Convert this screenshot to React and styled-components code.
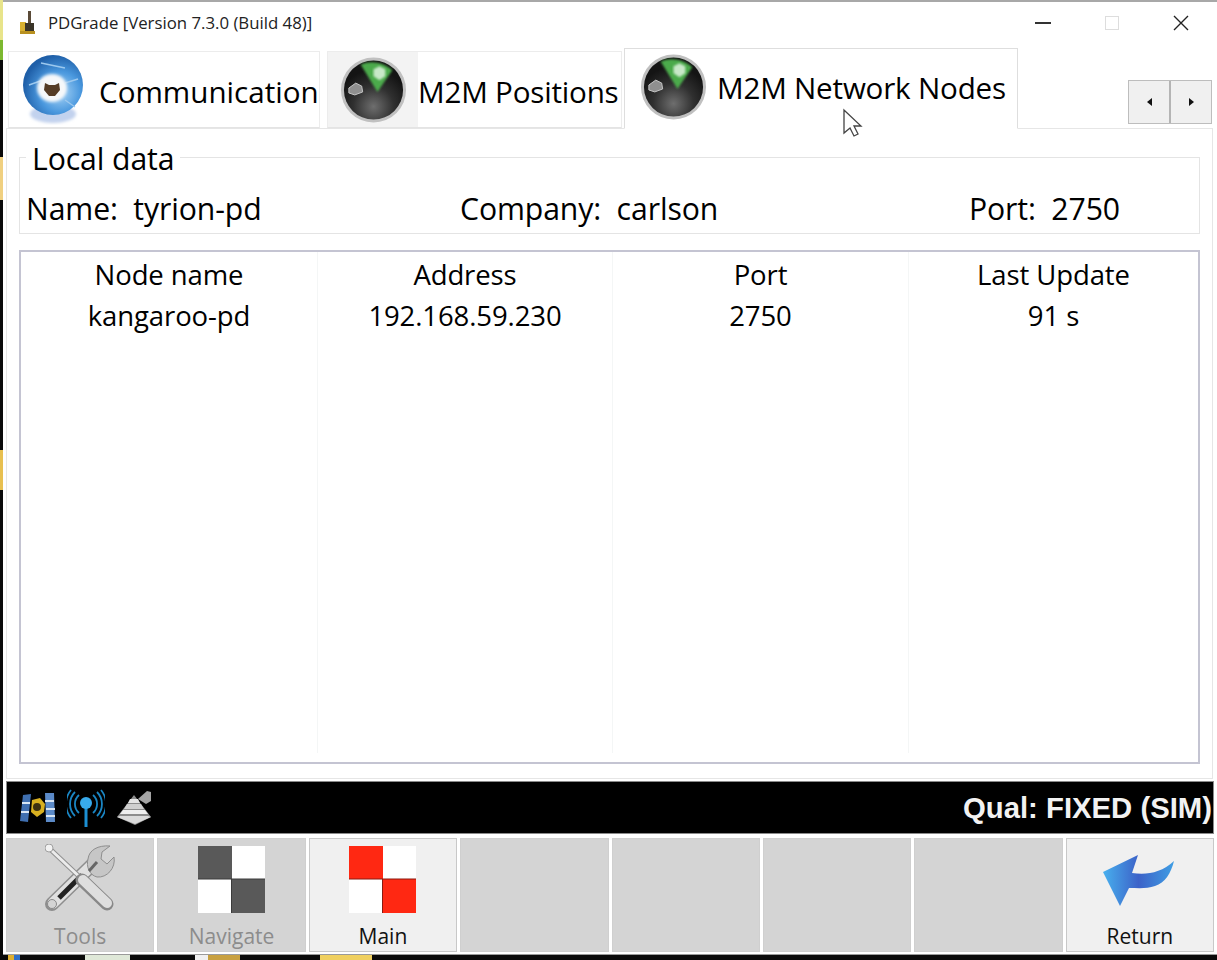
import React from 'react';
import styled, { createGlobalStyle } from 'styled-components';

const GlobalStyle = createGlobalStyle`
  html, body {
    margin: 0;
    padding: 0;
    background: #0b0b0b;
  }
  body {
    font-family: "Open Sans", "Noto Sans", sans-serif;
    color: #000;
  }
`;

const Desktop = styled.div`
  width: 1217px;
  height: 960px;
  overflow: hidden;
  padding-left: 3px;
  box-sizing: border-box;
  background: linear-gradient(
    180deg,
    #e8e48a 0 40px,
    #7cb830 40px 60px,
    #0a0a0a 60px 157px,
    #f0d080 157px 200px,
    #0a0a0a 200px 450px,
    #e8c050 450px 490px,
    #0a0a0a 490px 100%
  );
`;

const Window = styled.div`
  width: 1214px;
  height: 955px;
  box-sizing: border-box;
  background: #fff;
  border-top: 2px solid #a8a8a8;
  border-bottom: 1px solid #9a9a9a;
  display: flex;
  flex-direction: column;
  position: relative;
`;

const TaskStrip = styled.div`
  height: 5px;
  margin-left: -3px;
  background: linear-gradient(
    90deg,
    #0a0a0a 0 8px,
    #e0b030 8px 14px,
    #3070c8 14px 20px,
    #0a0a0a 20px 85px,
    #dfe8d8 85px 130px,
    #0a0a0a 130px 195px,
    #f0f0f0 195px 208px,
    #c8a040 208px 240px,
    #0a0a0a 240px 320px,
    #f0d060 320px 372px,
    #0a0a0a 372px 100%
  );
`;

const TitleBar = styled.div`
  height: 44px;
  flex: none;
  box-sizing: border-box;
  display: flex;
  align-items: center;
  padding: 0 2px 3px 15px;
  font-size: 16.8px;
  color: #222;
`;

const TitleText = styled.span`
  margin-left: 10px;
  flex: 1;
`;

const WinButton = styled.div`
  width: 69px;
  display: flex;
  align-items: center;
  justify-content: center;
`;

const TabRow = styled.div`
  height: 82px;
  flex: none;
  display: flex;
  align-items: flex-end;
  padding-left: 5px;
  position: relative;
`;

const Tab = styled.div`
  height: ${({ $active }) => ($active ? '81px' : '77px')};
  width: ${({ $w }) => $w}px;
  margin-left: ${({ $before }) => $before || 0}px;
  box-sizing: border-box;
  display: flex;
  align-items: center;
  background: ${({ $shade }) => ($shade ? '#f3f3f3' : '#fff')};
  border: 1px solid ${({ $active }) => ($active ? '#dedede' : '#ececec')};
  border-bottom-color: ${({ $active }) => ($active ? '#fff' : '#e4e4e4')};
  padding-left: ${({ $pad }) => $pad}px;
  padding-bottom: ${({ $active }) => ($active ? '4px' : '0')};
  font-size: 29.6px;
  letter-spacing: ${({ $tight }) => ($tight ? '-0.2px' : '0')};
  white-space: nowrap;
  margin-bottom: ${({ $active }) => ($active ? '-1px' : '0')};
  position: relative;
  z-index: ${({ $active }) => ($active ? 1 : 0)};
`;

const TabLabel = styled.span`
  margin-left: ${({ $gap }) => $gap}px;
  background: #fff;
  align-self: stretch;
  flex: 1;
  display: flex;
  align-items: center;
  padding-top: ${({ $active }) => ($active ? '2px' : '4px')};
`;

const ScrollArrows = styled.div`
  position: absolute;
  right: 5px;
  bottom: 4px;
  display: flex;
  height: 42px;
  border: 1px solid #bdbdbd;
  background: #f0f0f0;
`;

const ScrollArrow = styled.div`
  width: 40px;
  display: flex;
  align-items: center;
  justify-content: center;
  & + & {
    border-left: 2px solid #b4b4b4;
  }
`;

const TabPanel = styled.div`
  height: 651px;
  flex: none;
  margin: 0 4px 0 3px;
  box-sizing: border-box;
  border: 1px solid #e6e6e6;
  padding: 28px 12px 14px 12px;
  display: flex;
  flex-direction: column;
`;

const LocalData = styled.div`
  height: 77px;
  flex: none;
  box-sizing: border-box;
  border: 1px solid #e4e4e4;
  position: relative;
  display: flex;
  align-items: flex-end;
  padding: 0 0 4px 6px;
  font-size: 30.2px;
  letter-spacing: -0.1px;
`;

const Legend = styled.div`
  position: absolute;
  left: 6px;
  top: -18px;
  background: #fff;
  padding: 0 6px;
  line-height: 38px;
`;

const Field = styled.div`
  white-space: pre;
  width: ${({ $w }) => ($w ? `${$w}px` : 'auto')};
  line-height: 40px;
`;

const NodeTable = styled.div`
  margin-top: 16px;
  height: 514px;
  flex: none;
  box-sizing: border-box;
  border: 2px solid #c4c4d2;
  display: grid;
  grid-template-columns: 296px 295px 296px 1fr;
  font-size: 27.5px;
  letter-spacing: -0.1px;
`;

const Column = styled.div`
  border-left: ${({ $first }) => ($first ? 'none' : '1px solid #f4f6f6')};
  text-align: center;
  margin-bottom: 9px;
`;

const HeadCell = styled.div`
  height: 44px;
  line-height: 45px;
`;

const DataCell = styled.div`
  height: 39px;
  line-height: 39px;
`;

const StatusBar = styled.div`
  height: 53px;
  flex: none;
  margin: 2px 3px 0 3px;
  box-sizing: border-box;
  background: #000;
  border: 1px solid #8a8a8a;
  display: flex;
  align-items: center;
  padding: 0 1px 0 13px;
  gap: 12px;
`;

const Quality = styled.div`
  margin-left: auto;
  font-family: "Liberation Sans", Arial, sans-serif;
  font-weight: 700;
  font-size: 29.3px;
  color: #f2f2f2;
  white-space: nowrap;
`;

const ButtonRow = styled.div`
  flex: none;
  margin: 4px 3px 0 3px;
  height: 114px;
  display: grid;
  grid-template-columns: repeat(8, 1fr);
  column-gap: 3px;
`;

const BarButton = styled.div`
  box-sizing: border-box;
  background: ${({ $raised }) => ($raised ? '#f0f0f0' : '#d4d4d4')};
  border: 1px solid ${({ $raised }) => ($raised ? '#c8c8c8' : '#cfcfcf')};
  color: ${({ $dim }) => ($dim ? '#8c8c8c' : '#111')};
  display: flex;
  flex-direction: column;
  align-items: center;
  font-size: 21px;
  padding-top: 6px;
  overflow: hidden;
`;

const ButtonIcon = styled.div`
  height: 68px;
  display: flex;
  align-items: center;
  justify-content: center;
`;

const ButtonLabel = styled.div`
  margin-top: 9px;
  line-height: 28px;
`;

const Cursor = styled.svg`
  position: absolute;
  left: 839px;
  top: 106px;
  z-index: 3;
`;

function AppIcon() {
  return (
    <svg width="20" height="26" viewBox="0 0 20 26">
      <rect x="10" y="1" width="3" height="13" fill="#5a4a38" />
      <path d="M2 12h6v10H2z" fill="#d8b030" />
      <path d="M7 13h9v9H7z" fill="#3a3428" />
      <path d="M2 21h15v3H2z" fill="#b89020" />
    </svg>
  );
}

function CommIcon() {
  return (
    <svg width="62" height="70" viewBox="0 0 62 70" style={{ flex: 'none' }}>
      <defs>
        <radialGradient id="commBall" cx="62%" cy="62%" r="62%">
          <stop offset="0%" stopColor="#a8d4f6" />
          <stop offset="55%" stopColor="#4a98de" />
          <stop offset="100%" stopColor="#1f5fa8" />
        </radialGradient>
        <filter id="soft"><feGaussianBlur stdDeviation="1.6" /></filter>
      </defs>
      <ellipse cx="30" cy="59" rx="23" ry="9" fill="#c2d2ee" filter="url(#soft)" />
      <circle cx="30" cy="30" r="30" fill="url(#commBall)" />
      <path d="M18 8L42 13M6 30L20 25M55 24L42 28M42 45L52 52" stroke="#9cc8ee" strokeWidth="1.4" />
      <ellipse cx="29" cy="33" rx="15" ry="14" fill="#f6f8fa" filter="url(#soft)" />
      <path d="M22 28l4 2h6l4-2 1 7-5 6h-6l-5-6z" fill="#553c26" />
    </svg>
  );
}

function RadarIcon({ id }) {
  return (
    <svg width="67" height="68" viewBox="0 0 68 68" style={{ flex: 'none' }}>
      <defs>
        <radialGradient id={`${id}Body`} cx="50%" cy="78%" r="62%">
          <stop offset="0%" stopColor="#6e6e6e" />
          <stop offset="55%" stopColor="#303030" />
          <stop offset="100%" stopColor="#141414" />
        </radialGradient>
        <filter id={`${id}Blur`}><feGaussianBlur stdDeviation="1.2" /></filter>
      </defs>
      <circle cx="34" cy="34" r="33" fill="#c0c0c0" />
      <circle cx="34" cy="34" r="30" fill={`url(#${id}Body)`} />
      <path d="M21 8a30 30 0 0 1 32 6L38 36z" fill="#4caa4c" filter={`url(#${id}Blur)`} />
      <path d="M34 13l6-3 6 3 0 7-6 4-6-4z" fill="#c8e8c8" filter={`url(#${id}Blur)`} />
      <path d="M9 32l7-5 6 3 1 6-8 3-6-2z" fill="#8f8f8f" stroke="#c4c4c4" />
    </svg>
  );
}

function ToolsIcon() {
  return (
    <svg width="70" height="70" viewBox="0 0 70 70">
      {/* wrench */}
      <path d="M7 60L47 21" stroke="#8e8e8e" strokeWidth="14" strokeLinecap="round" />
      <path d="M8 59L46 22" stroke="#e0e0e0" strokeWidth="11" strokeLinecap="round" />
      <path d="M14 54L37 31" stroke="#222" strokeWidth="5" />
      <path d="M43 15C44 6 53 1 65 2L57 8 56 15 62 20 69 13C71 24 62 34 52 33 44 31 41 22 43 15z" fill="#c6c6c6" stroke="#8e8e8e" />
      <path d="M44 27l8-9" stroke="#666" strokeWidth="3" />
      <circle cx="7" cy="60" r="4.5" fill="#d4d4d4" stroke="#8a8a8a" />
      {/* screwdriver */}
      <path d="M5 5L40 38" stroke="#909090" strokeWidth="5" strokeLinecap="round" />
      <path d="M5 5L40 38" stroke="#ececec" strokeWidth="3" strokeLinecap="round" />
      <circle cx="4" cy="4" r="4" fill="#f2f2f2" stroke="#a0a0a0" />
      <path d="M37 36L62 60" stroke="#888" strokeWidth="13" strokeLinecap="round" />
      <path d="M38 36L62 59" stroke="#dedede" strokeWidth="10" strokeLinecap="round" />
    </svg>
  );
}

function CheckerIcon({ color, seam }) {
  return (
    <svg width="67" height="67" viewBox="0 0 67 67">
      <rect width="67" height="67" fill="#fff" />
      <rect width="34" height="33" fill={color} />
      <rect x="33" y="33" width="34" height="34" fill={color} />
      <path d="M0 33h34M33.5 33v34M34 33h33" stroke={seam} strokeWidth="1" />
    </svg>
  );
}

function ReturnIcon() {
  return (
    <svg width="73" height="60" viewBox="0 0 73 60">
      <defs>
        <linearGradient id="returnFill" x1="0" y1="0" x2="1" y2="0">
          <stop offset="0%" stopColor="#48b0ee" />
          <stop offset="50%" stopColor="#3c62c8" />
          <stop offset="100%" stopColor="#3f9ee4" />
        </linearGradient>
      </defs>
      <path d="M0 23L35 6 29 24C44 26 58 24 71 12 68 24 62 34 52 37 44 40 35 39 26 39L17 57z" fill="url(#returnFill)" />
    </svg>
  );
}

function SatelliteIcon() {
  return (
    <svg width="35" height="32" viewBox="0 0 35 32">
      <path d="M3 3l8-1-3 28-8-1z" fill="#3f6fb0" />
      <path d="M25 1h9l1 29h-9z" fill="#5b8ac8" />
      <path d="M2 11l8 0M1 20l8 0M25 9l9 0M26 17l9 0M26 24l9 0" stroke="#d8e6f4" strokeWidth="2" />
      <path d="M12 8l8-2 5 6-1 8-7 5-6-5z" fill="#d8b020" />
      <circle cx="17" cy="15" r="4" fill="#3c3010" />
    </svg>
  );
}

function AntennaIcon() {
  return (
    <svg width="38" height="38" viewBox="0 0 38 38">
      <g fill="none" stroke="#1a86c4" strokeWidth="1.8">
        <path d="M12 6a12 12 0 0 0 0 18M26 6a12 12 0 0 1 0 18" />
        <path d="M8 3a17 17 0 0 0 0 24M30 3a17 17 0 0 1 0 24" />
        <path d="M4 1a22 22 0 0 0 0 28M34 1a22 22 0 0 1 0 28" />
      </g>
      <rect x="17.5" y="14" width="3" height="24" fill="#1c90d4" />
      <circle cx="19" cy="14" r="6" fill="#38aaec" />
    </svg>
  );
}

function PyramidIcon() {
  return (
    <svg width="35" height="35" viewBox="0 0 35 35">
      <path d="M17 5L34 27 18 35 0 27z" fill="#8c8c8c" />
      <path d="M13 9h8l2 4H11z" fill="#e4e4e4" />
      <path d="M10 14h14l3 5H7z" fill="#cfcfcf" />
      <path d="M6 20h22l3 4H3z" fill="#eeeeee" />
      <path d="M3 26h28l3 1-16 7L0 27z" fill="#dadada" />
      <path d="M21 9l9-8 4 1 0 9-5 3z" fill="#a4a4a4" />
    </svg>
  );
}

const columns = [
  ['Node name', 'kangaroo-pd'],
  ['Address', '192.168.59.230'],
  ['Port', '2750'],
  ['Last Update', '91 s'],
];

export default function App() {
  return (
    <Desktop>
      <GlobalStyle />
      <Window>
        <Cursor width="22" height="30" viewBox="0 0 22 30">
          <path d="M2 2v23l6-5 4 8 4-2-4-8h7z" fill="#fff" stroke="#444" strokeWidth="1.3" />
        </Cursor>
        <TitleBar>
          <AppIcon />
          <TitleText>PDGrade [Version 7.3.0 (Build 48)]</TitleText>
          <WinButton>
            <svg width="16" height="2"><rect width="16" height="2" fill="#333" /></svg>
          </WinButton>
          <WinButton>
            <svg width="14" height="14"><rect x="0.5" y="0.5" width="13" height="13" fill="none" stroke="#ddd" /></svg>
          </WinButton>
          <WinButton>
            <svg width="16" height="16"><path d="M1 1l14 14M15 1L1 15" stroke="#222" strokeWidth="1.4" /></svg>
          </WinButton>
        </TitleBar>
        <TabRow>
          <Tab $w={312} $pad={14}>
            <CommIcon />
            <TabLabel $gap={14}>Communication</TabLabel>
          </Tab>
          <Tab $shade $tight $before={7} $w={295} $pad={12}>
            <RadarIcon id="radarPositions" />
            <TabLabel $gap={11}>M2M Positions</TabLabel>
          </Tab>
          <Tab $active $tight $before={2} $w={394} $pad={15}>
            <RadarIcon id="radarNodes" />
            <TabLabel $active $gap={10}>M2M Network Nodes</TabLabel>
          </Tab>
          <ScrollArrows>
            <ScrollArrow>
              <svg width="5" height="8"><path d="M5 0v8L0 4z" fill="#111" /></svg>
            </ScrollArrow>
            <ScrollArrow>
              <svg width="5" height="8"><path d="M0 0v8l5-4z" fill="#111" /></svg>
            </ScrollArrow>
          </ScrollArrows>
        </TabRow>
        <TabPanel>
          <LocalData>
            <Legend>Local data</Legend>
            <Field $w={434}>Name:  tyrion-pd</Field>
            <Field $w={509}>Company:  carlson</Field>
            <Field>Port:  2750</Field>
          </LocalData>
          <NodeTable>
            {columns.map(([head, value], i) => (
              <Column key={head} $first={i === 0}>
                <HeadCell>{head}</HeadCell>
                <DataCell>{value}</DataCell>
              </Column>
            ))}
          </NodeTable>
        </TabPanel>
        <StatusBar>
          <SatelliteIcon />
          <AntennaIcon />
          <PyramidIcon />
          <Quality>Qual: FIXED (SIM)</Quality>
        </StatusBar>
        <ButtonRow>
          <BarButton $dim>
            <ButtonIcon><ToolsIcon /></ButtonIcon>
            <ButtonLabel>Tools</ButtonLabel>
          </BarButton>
          <BarButton $dim>
            <ButtonIcon><CheckerIcon color="#595959" seam="#3c3c3c" /></ButtonIcon>
            <ButtonLabel>Navigate</ButtonLabel>
          </BarButton>
          <BarButton $raised>
            <ButtonIcon><CheckerIcon color="#ff2812" seam="#8a1a10" /></ButtonIcon>
            <ButtonLabel>Main</ButtonLabel>
          </BarButton>
          <BarButton />
          <BarButton />
          <BarButton />
          <BarButton />
          <BarButton $raised>
            <ButtonIcon><ReturnIcon /></ButtonIcon>
            <ButtonLabel>Return</ButtonLabel>
          </BarButton>
        </ButtonRow>
      </Window>
      <TaskStrip />
    </Desktop>
  );
}
